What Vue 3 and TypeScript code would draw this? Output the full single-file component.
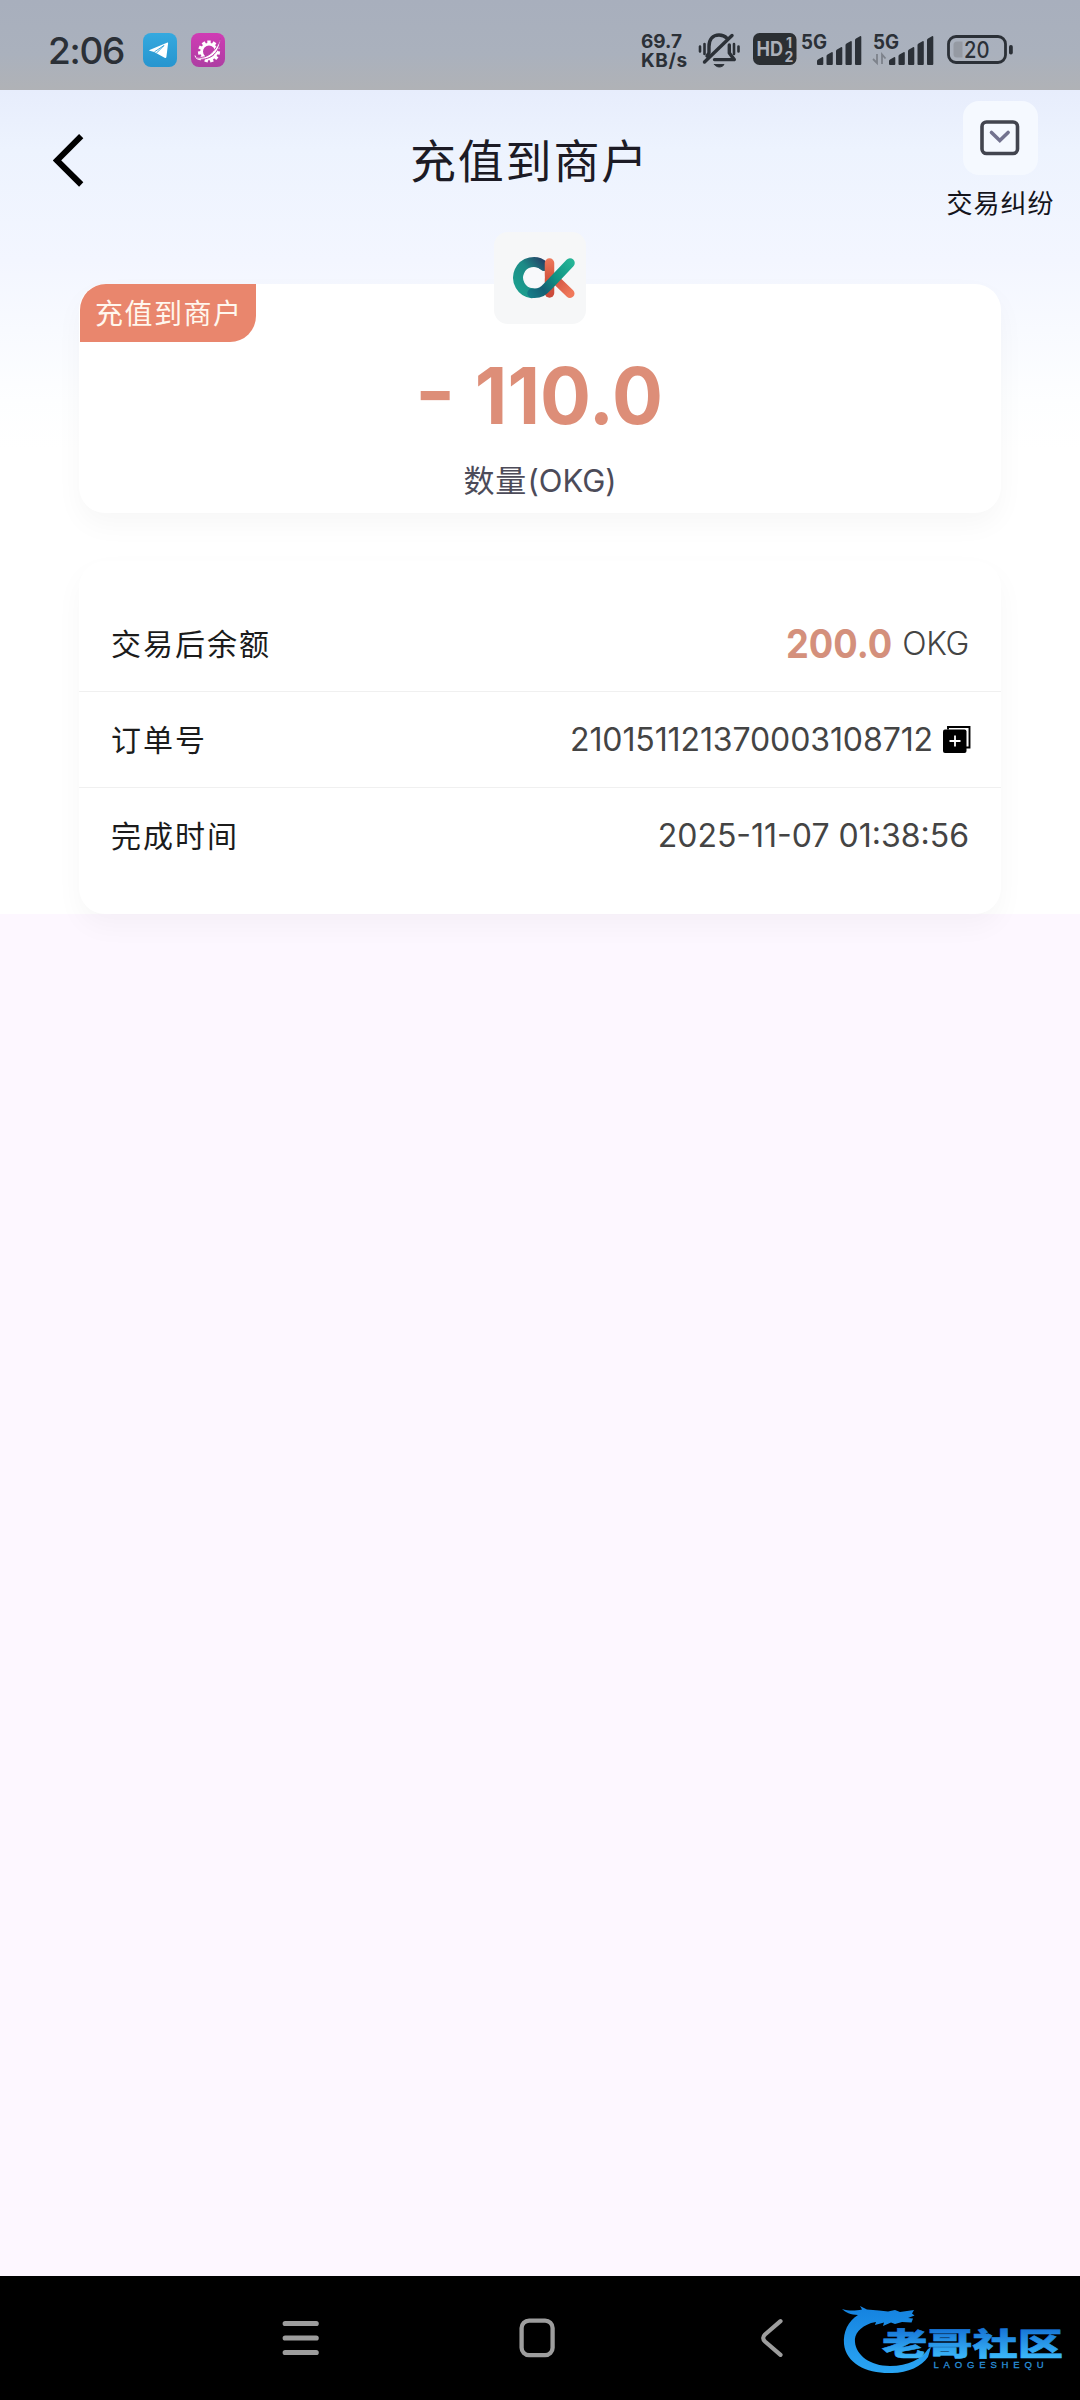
<script setup lang="ts">
interface Row {
  label: string
  value: string
  kind: 'balance' | 'order' | 'time'
  unit?: string
}

const rows: Row[] = [
  { label: '交易后余额', value: '200.0', kind: 'balance', unit: 'OKG' },
  { label: '订单号', value: '210151121370003108712', kind: 'order' },
  { label: '完成时间', value: '2025-11-07 01:38:56', kind: 'time' },
]

const bars = [7, 12, 17, 23, 28]
const teeth = Array.from({ length: 11 }, (_, i) => i * (360 / 11))
</script>

<template>
  <div class="screen">
    <header class="status">
      <span class="clock">2:06</span>
      <svg class="app-icon" width="34" height="34" viewBox="0 0 34 34">
        <defs>
          <linearGradient id="tg" x1="0" y1="0" x2="0" y2="1">
            <stop offset="0" stop-color="#35a9df" />
            <stop offset="1" stop-color="#2795cf" />
          </linearGradient>
        </defs>
        <rect width="34" height="34" rx="8" fill="url(#tg)" />
        <path d="M6.500 17 24.500 9.600q.7-.2.600.7L23.400 24q-.3 1.600-1.800.8L11.200 19l-4.600-1.200q-.9-.4-.1-.8z" fill="#fff" />
        <path d="M11.500 18.800 21 12.500l-7.300 7.400" fill="none" stroke="#2f9fd7" stroke-width=".9" />
      </svg>
      <svg class="app-icon gear" width="34" height="34" viewBox="0 0 34 34">
        <defs>
          <linearGradient id="pk" x1="0" y1="0" x2="0" y2="1">
            <stop offset="0" stop-color="#d03cb4" />
            <stop offset="1" stop-color="#ad3ea2" />
          </linearGradient>
        </defs>
        <rect width="34" height="34" rx="8" fill="url(#pk)" />
        <g fill="#fff">
          <rect v-for="a in teeth" :key="a" x="16.300" y="7.500" width="3.400" height="4.500" :transform="`rotate(${a} 18 18.500)`" />
        </g>
        <circle cx="18" cy="18.500" r="7.400" fill="none" stroke="#fff" stroke-width="2.800" />
        <path d="M4.500 23.500C14 27 25 20 29.500 5 29.500 18 20 28 7.500 26z" fill="#fff" stroke="#bd3daa" stroke-width="1" />
        <path d="M4 22.500c.5 3 3 4.200 6 4.300" fill="none" stroke="#fff" stroke-width="1" />
      </svg>

      <div class="spacer"></div>

      <span class="speed"><span>69.7</span><span class="unit">KB/s</span></span>
      <svg class="bell" width="42" height="38" viewBox="0 0 42 38" fill="none" stroke="#2b3037" stroke-linecap="round" stroke-linejoin="round">
        <path d="M11 22V15.500C11 8 15 4 21 4c3.500 0 6 1.200 7.800 3.200M31.300 14V22l5 6.600H16.500M11 22l-2 3" stroke-width="3.400" />
        <path d="M34 4.500 6.500 31" stroke-width="3.400" />
        <path d="M16.500 33.600h9.500c-2 3.200-7.500 3.200-9.500 0z" fill="#2b3037" stroke-width="1" />
        <path d="M2 15.500v5M6.500 13v10M36 13v10M40.500 15.500v5" stroke-width="2.600" />
      </svg>
      <svg class="hd" width="44" height="34" viewBox="0 0 44 34">
        <rect y="1" width="43.500" height="32" rx="6.500" fill="#2b2f33" />
        <g fill="#abb0b9" font-family="Inter, sans-serif" font-weight="700">
          <text x="3.500" y="24" font-size="19.500" textLength="26.500" lengthAdjust="spacingAndGlyphs">HD</text>
          <text x="33" y="15.700" font-size="14">1</text>
          <text x="31.500" y="29.700" font-size="14">2</text>
        </g>
      </svg>
      <svg v-for="n in 2" :key="n" :class="['signal', `sim${n}`]" width="62" height="34" viewBox="0 0 62 34" fill="#2b3037">
        <text x="0" y="15.500" font-family="Inter, sans-serif" font-weight="700" font-size="19.500" textLength="26" lengthAdjust="spacingAndGlyphs">5G</text>
        <path v-for="(h, i) in bars" :key="h" :d="`M${16 + i * 9.500} 31v${-h + 4}q0-1 1-1.500l4-2.300q1.300-.4 1.300.8v${h - 1}q0 1-1 1h-4.300q-1 0-1-1z`" />
        <g v-if="n === 2" fill="none" stroke="#7d828b" stroke-width="1.800">
          <path d="M4 21v9l-4-4" />
          <path d="M9 31V21.500l3.500 4" />
        </g>
      </svg>
      <svg class="battery" width="67" height="30" viewBox="0 0 67 30">
        <rect x="1.500" y="1.500" width="57" height="26" rx="7.500" fill="none" stroke="#2b3037" stroke-width="2.800" />
        <path d="M10 6.500h5.500v16H10q-3.500 0-3.500-3.500v-9q0-3.500 3.500-3.500z" fill="#959aa3" />
        <rect x="62" y="10" width="3.800" height="9.500" rx="1.800" fill="#2b3037" />
        <text x="17" y="22.700" font-family="Inter, sans-serif" font-weight="500" font-size="22.500" fill="#2b3037" textLength="25.500" lengthAdjust="spacingAndGlyphs">20</text>
      </svg>
    </header>

    <main class="page">
      <div class="topbar">
        <svg class="back" width="32" height="54" viewBox="0 0 32 54">
          <path d="M28.200 2.200 4 26.500 28.200 50.500" fill="none" stroke="#000" stroke-width="6" />
        </svg>
        <h1>充值到商户</h1>
        <div class="dispute">
          <div class="dispute-box">
            <svg width="40" height="36" viewBox="0 0 40 36" fill="none">
              <rect x="2" y="2" width="35.500" height="31.500" rx="4.500" stroke="#42454f" stroke-width="3.600" />
              <path d="m11.500 12.500 8.300 8 8.300-8" stroke="#73738f" stroke-width="3.600" stroke-linecap="round" />
            </svg>
          </div>
          <span>交易纠纷</span>
        </div>
      </div>

      <section class="card amount-card">
        <span class="tag">充值到商户</span>
        <div class="coin">
          <svg width="64" height="44" viewBox="0 0 64 44" fill="none" stroke-linecap="round">
            <defs>
              <linearGradient id="ok1" gradientUnits="userSpaceOnUse" x1="6" y1="30" x2="34" y2="6">
                <stop offset="0" stop-color="#1c9c8d" />
                <stop offset=".5" stop-color="#1c8a86" />
                <stop offset="1" stop-color="#253f66" />
              </linearGradient>
              <linearGradient id="ok2" gradientUnits="userSpaceOnUse" x1="14" y1="38" x2="60" y2="6">
                <stop offset="0" stop-color="#14808a" />
                <stop offset=".3" stop-color="#145f74" />
                <stop offset=".6" stop-color="#109283" />
                <stop offset="1" stop-color="#25b496" />
              </linearGradient>
              <linearGradient id="ok3" gradientUnits="userSpaceOnUse" x1="0" y1="2" x2="0" y2="42">
                <stop offset="0" stop-color="#f07a5c" />
                <stop offset=".5" stop-color="#d4553f" />
                <stop offset="1" stop-color="#c9483a" />
              </linearGradient>
              <linearGradient id="ok4" gradientUnits="userSpaceOnUse" x1="40" y1="22" x2="58" y2="38">
                <stop offset="0" stop-color="#cc4c3e" />
                <stop offset="1" stop-color="#f0785a" />
              </linearGradient>
            </defs>
            <path d="M32 10A15.600 15.600 0 1 0 20 37.200" stroke="url(#ok1)" stroke-width="10" />
            <path d="M37.500 7v30" stroke="url(#ok3)" stroke-width="9.500" />
            <path d="m44 24 14 13.500" stroke="url(#ok4)" stroke-width="9" />
            <path d="M20 37.200c8 1 12-2.500 16-7L58 7" stroke="url(#ok2)" stroke-width="9.500" />
            <circle cx="22.500" cy="21.500" r="10" fill="#f8f9fb" />
          </svg>
        </div>
        <div class="amount"><span class="minus">-</span><span class="figure">110.0</span></div>
        <div class="caption">数量<span>(OKG)</span></div>
      </section>

      <section class="card detail-card">
        <div v-for="row in rows" :key="row.kind" class="row">
          <span class="label">{{ row.label }}</span>
          <span :class="['value', row.kind]">{{ row.value }}</span>
          <span v-if="row.unit" class="coin-unit">{{ row.unit }}</span>
          <svg v-if="row.kind === 'order'" class="copy" width="28" height="28" viewBox="0 0 28 28">
            <path d="M5 3.500V1h21.500v20.500H23" fill="none" stroke="#000" stroke-width="1.900" />
            <rect x="0" y="3.500" width="23.500" height="23.500" rx="2" fill="#000" />
            <path d="M12 9.500v11M6.500 15h11" stroke="#fff" stroke-width="1.800" />
          </svg>
        </div>
      </section>
    </main>

    <footer class="navbar">
      <svg class="menu" width="38" height="36" viewBox="0 0 38 36" stroke="#9d9d9d" stroke-width="5.200" stroke-linecap="round">
        <path d="M3.200 3.500h31M3.200 18h31M3.200 32.500h31" />
      </svg>
      <svg class="home" width="36" height="40" viewBox="0 0 36 40">
        <rect x="2.600" y="2.600" width="31" height="34.600" rx="7.500" fill="none" stroke="#9d9d9d" stroke-width="4.300" />
      </svg>
      <svg class="prev" width="24" height="40" viewBox="0 0 24 40">
        <path d="M20.500 3.200 5 16.500q-3.600 3.500 0 7L20.500 36.800" fill="none" stroke="#9d9d9d" stroke-width="4.200" stroke-linecap="round" />
      </svg>
      <svg class="watermark" width="238" height="90" viewBox="0 0 238 90">
        <defs>
          <linearGradient id="wm" gradientUnits="userSpaceOnUse" x1="0" y1="10" x2="0" y2="76">
            <stop offset="0" stop-color="#1583e0" />
            <stop offset="1" stop-color="#2aa6f4" />
          </linearGradient>
          <linearGradient id="wt" gradientUnits="userSpaceOnUse" x1="0" y1="30" x2="0" y2="59">
            <stop offset="0" stop-color="#1573d6" />
            <stop offset="1" stop-color="#3ab6f8" />
          </linearGradient>
        </defs>
        <path d="M0 11c8 2.500 14 1.500 20 .5L18 8l7 3.500 12 1 9 1 7-1.500 5 2 14-2-2 3.500 2.500 2L66 20l5 .5-1.500 4L60 24l-7 2-4-1.500L41 28l1-3.500-9 2.500 1-3-5 1C18 29 12 36 13 44c1 13 15 24 35 24 18 0 32-7 38-17l3-2-3 10C80 68 66 75 50 75 26 76 4 66 2 46 1 34 6 23 16 17 9 17 3 14 0 11z" fill="url(#wm)" />
        <text x="40" y="56.500" font-family="'Noto Sans CJK SC', sans-serif" font-weight="900" font-size="31" fill="url(#wt)" stroke="url(#wt)" stroke-width=".6" textLength="181" lengthAdjust="spacingAndGlyphs">老哥社区</text>
        <text x="91.500" y="69.500" font-family="'Liberation Sans', sans-serif" font-size="9.500" fill="#2a8fd8" stroke="#2a8fd8" stroke-width=".3" textLength="110">LAOGESHEQU</text>
      </svg>
    </footer>
  </div>
</template>

<style>
body {
  margin: 0;
}
</style>

<style scoped>
.screen {
  width: 1080px;
  height: 2400px;
  display: flex;
  flex-direction: column;
  background: #fdf7ff;
  font-family: Inter, "Noto Sans CJK SC", sans-serif;
  overflow: hidden;
}
.status {
  height: 90px;
  box-sizing: border-box;
  padding: 0 66px 0 48px;
  display: flex;
  align-items: flex-start;
  background: linear-gradient(#a8afbd, #aab1bd 60%, #b0b2b6);
  color: #2b3037;
}
.clock {
  width: 95px;
  padding-top: 28px;
  line-height: 46px;
  font-size: 37px;
  font-weight: 500;
  letter-spacing: -1.3px;
}
.app-icon {
  margin-top: 33px;
}
.gear {
  margin-left: 14px;
}
.spacer {
  flex: 1;
}
.speed {
  display: flex;
  flex-direction: column;
  width: 57px;
  margin-top: 32px;
  font-size: 19px;
  line-height: 19px;
  font-weight: 700;
}
.speed .unit {
  letter-spacing: 0.6px;
}
.bell {
  margin: 31px 13px 0 0;
}
.hd {
  margin: 32px 4px 0 0;
}
.signal {
  margin-top: 33px;
  overflow: visible;
}
.sim1 {
  margin-right: 10px;
}
.battery {
  margin: 35px 0 0 12px;
}
.page {
  height: 824px;
  background: linear-gradient(#e7edfc, #edf3fe 60px, #f3f6ff 170px, #fdfeff 310px, #fff 360px);
}
.topbar {
  height: 194px;
  display: flex;
  align-items: flex-start;
}
.back {
  margin: 44px 0 0 53px;
}
h1 {
  flex: 1;
  margin: 37px 0 0;
  padding-left: 325px;
  font-size: 46px;
  line-height: 68px;
  font-weight: 400;
  letter-spacing: 1.8px;
  color: #1c1b25;
}
.dispute {
  width: 160px;
  display: flex;
  flex-direction: column;
  align-items: center;
  font-size: 26px;
  line-height: 38px;
  letter-spacing: 1px;
  color: #14141c;
}
.dispute span {
  padding-left: 1px;
}
.dispute-box {
  width: 75px;
  height: 74px;
  margin: 11px 0 10px;
  border-radius: 16px;
  background: #f5f9ff;
  display: flex;
  align-items: center;
  justify-content: center;
}
.card {
  width: 922px;
  margin: 0 auto;
  border-radius: 26px;
  background: #fff;
  box-shadow: 0 12px 28px rgba(0, 0, 0, 0.035);
  position: relative;
}
.amount-card {
  height: 229px;
  display: flex;
  flex-direction: column;
  align-items: center;
}
.tag {
  position: absolute;
  left: 1px;
  top: 0;
  width: 176px;
  height: 58px;
  box-sizing: border-box;
  padding-left: 15px;
  border-radius: 26px 0 26px 0;
  background: #e9866d;
  color: #fff7ee;
  font-size: 28px;
  line-height: 60px;
  letter-spacing: 1.5px;
}
.coin {
  width: 92px;
  height: 92px;
  margin-top: -52px;
  border-radius: 14px;
  background: #f6f7f8;
  display: flex;
  align-items: center;
  justify-content: center;
}
.coin svg {
  margin-left: 7px;
}
.amount {
  width: 246px;
  height: 96px;
  margin-top: 24px;
  display: flex;
  justify-content: space-between;
  font-size: 78px;
  line-height: 96px;
  font-weight: 700;
  color: #dd8e78;
}
.minus {
  transform: translateY(-5px) scaleX(1.12);
}
.figure {
  transform: scaleX(0.97);
  transform-origin: right;
}
.caption {
  margin-top: 17px;
  font-size: 31px;
  line-height: 40px;
  letter-spacing: 1px;
  color: #4c4b59;
}
.caption span {
  letter-spacing: 0;
}
.detail-card {
  height: 353px;
  box-sizing: border-box;
  padding-top: 35px;
  margin-top: 48px;
}
.row {
  height: 95px;
  padding: 0 32px;
  display: flex;
  align-items: center;
  border-bottom: 1px solid #f0f0f0;
}
.row:last-child {
  border-bottom: 0;
}
.label {
  flex: 1;
  padding-bottom: 4px;
  font-size: 30px;
  letter-spacing: 2px;
  color: #1b1b1b;
}
.value {
  font-size: 32px;
  letter-spacing: -0.1px;
  color: #444;
}
.time {
  letter-spacing: 0;
}
.balance {
  font-size: 39px;
  font-weight: 700;
  letter-spacing: 0;
  color: #d4907c;
  transform: scaleX(0.93);
  transform-origin: right;
}
.coin-unit {
  margin-left: 10px;
  font-size: 32px;
  font-weight: 300;
  letter-spacing: -0.3px;
  color: #444;
}
.copy {
  margin: 0 -2px 0 10px;
}
.navbar {
  height: 124px;
  margin-top: auto;
  position: relative;
  display: flex;
  align-items: center;
  background: #000;
}
.menu {
  margin-left: 282px;
}
.home {
  margin-left: 199px;
}
.prev {
  margin-left: 205px;
}
.watermark {
  position: absolute;
  left: 842px;
  top: 22px;
}
</style>
